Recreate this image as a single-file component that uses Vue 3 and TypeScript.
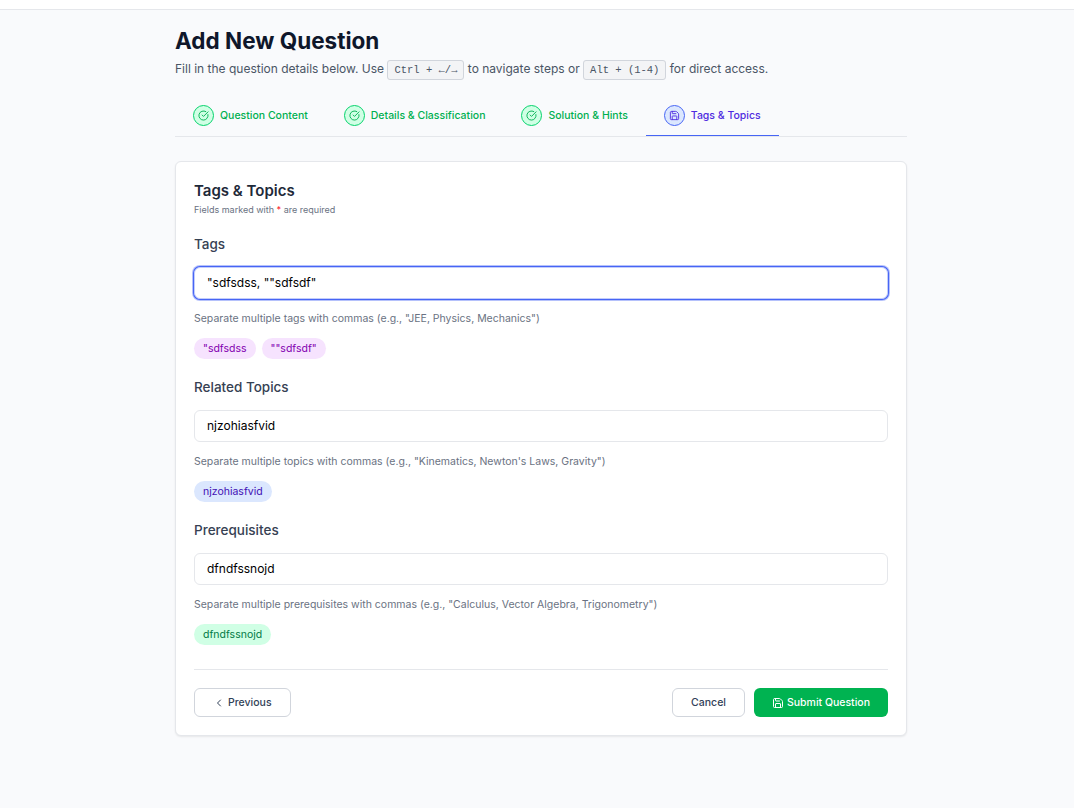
<script setup lang="ts">
import { ref } from 'vue'

interface Step {
  label: string
  active: boolean
}

interface Field {
  id: string
  label: string
  value: string
  hint: string
  chips: string[]
  tone: 'purple' | 'blue' | 'green'
  focused: boolean
}

const steps: Step[] = [
  { label: 'Question Content', active: false },
  { label: 'Details & Classification', active: false },
  { label: 'Solution & Hints', active: false },
  { label: 'Tags & Topics', active: true },
]

const fields = ref<Field[]>([
  {
    id: 'tags',
    label: 'Tags',
    value: '"sdfsdss, ""sdfsdf"',
    hint: 'Separate multiple tags with commas (e.g., "JEE, Physics, Mechanics")',
    chips: ['"sdfsdss', '""sdfsdf"'],
    tone: 'purple',
    focused: true,
  },
  {
    id: 'topics',
    label: 'Related Topics',
    value: 'njzohiasfvid',
    hint: 'Separate multiple topics with commas (e.g., "Kinematics, Newton\'s Laws, Gravity")',
    chips: ['njzohiasfvid'],
    tone: 'blue',
    focused: false,
  },
  {
    id: 'prerequisites',
    label: 'Prerequisites',
    value: 'dfndfssnojd',
    hint: 'Separate multiple prerequisites with commas (e.g., "Calculus, Vector Algebra, Trigonometry")',
    chips: ['dfndfssnojd'],
    tone: 'green',
    focused: false,
  },
])
</script>

<template>
  <div class="page">
    <header class="topbar"></header>
    <main class="container">
      <h1 class="title">Add New Question</h1>
      <p class="subtitle">
        Fill in the question details below. Use <kbd>Ctrl + ←/→</kbd> to navigate steps or
        <kbd>Alt + (1-4)</kbd> for direct access.
      </p>

      <nav class="steps">
        <button v-for="step in steps" :key="step.label" type="button" class="step" :class="{ active: step.active }">
          <span class="step-icon">
            <svg v-if="step.active" viewBox="0 0 24 24">
              <path d="M15.2 3a2 2 0 0 1 1.4.6l3.8 3.8a2 2 0 0 1 .6 1.4V19a2 2 0 0 1-2 2H5a2 2 0 0 1-2-2V5a2 2 0 0 1 2-2z" />
              <path d="M17 21v-7a1 1 0 0 0-1-1H8a1 1 0 0 0-1 1v7M7 3v4a1 1 0 0 0 1 1h7" />
            </svg>
            <svg v-else viewBox="0 0 24 24">
              <path d="M21.801 10A10 10 0 1 1 17 3.335" />
              <path d="m9 11 3 3L22 4" />
            </svg>
          </span>
          <span>{{ step.label }}</span>
        </button>
      </nav>

      <section class="card">
        <h2 class="card-title">Tags &amp; Topics</h2>
        <p class="required">Fields marked with <span class="star">*</span> are required</p>

        <div v-for="field in fields" :key="field.id" class="field">
          <label class="label" :for="field.id">{{ field.label }}</label>
          <input :id="field.id" v-model="field.value" class="input" :class="{ focused: field.focused }" type="text" />
          <p class="hint">{{ field.hint }}</p>
          <div class="chips">
            <span v-for="chip in field.chips" :key="chip" class="chip" :class="field.tone">{{ chip }}</span>
          </div>
        </div>

        <footer class="actions">
          <button type="button" class="btn previous">
            <svg viewBox="0 0 24 24"><path d="m15 18-6-6 6-6" /></svg>
            Previous
          </button>
          <div class="actions-end">
            <button type="button" class="btn">Cancel</button>
            <button type="button" class="btn submit">
              <svg viewBox="0 0 24 24">
                <path d="M15.2 3a2 2 0 0 1 1.4.6l3.8 3.8a2 2 0 0 1 .6 1.4V19a2 2 0 0 1-2 2H5a2 2 0 0 1-2-2V5a2 2 0 0 1 2-2z" />
                <path d="M17 21v-7a1 1 0 0 0-1-1H8a1 1 0 0 0-1 1v7M7 3v4a1 1 0 0 0 1 1h7" />
              </svg>
              Submit Question
            </button>
          </div>
        </footer>
      </section>
    </main>
  </div>
</template>

<style>
body {
  background: #f9fafc;
}
</style>

<style scoped>
.page {
  min-height: 808px;
  background: #f9fafc;
  font-family: Inter, 'Liberation Sans', sans-serif;
  color: #101828;
}
.page * {
  box-sizing: border-box;
}
h1,
h2,
p {
  margin: 0;
}
button,
input {
  font-family: inherit;
  margin: 0;
}
svg {
  fill: none;
  stroke: currentColor;
  stroke-width: 2;
  stroke-linecap: round;
  stroke-linejoin: round;
}
.topbar {
  height: 10px;
  background: #fff;
  border-bottom: 1px solid #e5e7eb;
}
.container {
  width: 732px;
  margin-left: 175px;
  padding-top: 17px;
}
.title {
  font-size: 22.5px;
  line-height: 27px;
  font-weight: 700;
  color: #0f172b;
}
.subtitle {
  margin-top: 6px;
  font-size: 12px;
  line-height: 18px;
  color: #4a5565;
}
kbd {
  padding: 3px 6px;
  font-family: 'Liberation Mono', monospace;
  font-size: 10.5px;
  line-height: 15px;
  background: #f3f4f6;
  border: 1px solid #d1d5dc;
  border-radius: 3px;
}
.steps {
  display: flex;
  margin-top: 16px;
  height: 43px;
  border-bottom: 1px solid #e5e7eb;
}
.step {
  display: flex;
  align-items: center;
  gap: 6px;
  height: 42px;
  padding: 2px 18px 0;
  border: 0;
  border-bottom: 1px solid transparent;
  background: transparent;
  font-size: 10.5px;
  line-height: 15px;
  font-weight: 500;
  color: #00b050;
}
.step.active {
  color: #4f2be0;
  border-bottom-color: #4765f5;
}
.step-icon {
  display: flex;
  align-items: center;
  justify-content: center;
  width: 21px;
  height: 21px;
  border: 1px solid #05d36c;
  border-radius: 50%;
  background: #d0ffe5;
}
.active .step-icon {
  border-color: #4765f5;
  background: #dbe7fe;
}
.step-icon svg {
  width: 11px;
  height: 11px;
}
.card {
  margin-top: 24px;
  height: 575px;
  padding: 18px;
  background: #fff;
  border: 1px solid #e5e7eb;
  border-radius: 6px;
  box-shadow: 0 1px 2px rgb(0 0 0 / 8%);
}
.card-title {
  font-size: 15px;
  line-height: 21px;
  font-weight: 600;
  color: #1e2939;
}
.required {
  margin-top: 3px;
  font-size: 9px;
  line-height: 12px;
  color: #6a7282;
}
.star {
  color: #fb2c36;
  font-weight: 500;
}
.field {
  display: flex;
  flex-direction: column;
  height: 125px;
  margin-top: 18px;
}
.label {
  font-size: 13.5px;
  line-height: 21px;
  font-weight: 500;
  color: #364153;
}
.input {
  width: 100%;
  height: 32px;
  margin-top: 12px;
  padding: 0 12px 1px;
  border: 1px solid #e5e7eb;
  border-radius: 6px;
  background: #fff;
  font-size: 12px;
  color: #000;
  outline: none;
}
.input.focused {
  border-color: #c3cdfb;
  box-shadow:
    0 0 0 1px #4765f5,
    0 0 0 2px rgb(71 101 245 / 40%);
}
.hint {
  margin-top: 12px;
  font-size: 10.5px;
  line-height: 15px;
  color: #6a7282;
}
.chips {
  display: flex;
  gap: 6px;
  margin-top: 12px;
}
.chip {
  height: 21px;
  padding: 0 9px;
  border-radius: 11px;
  font-size: 10.5px;
  line-height: 21px;
}
.purple {
  background: #f6e3fe;
  color: #8200b0;
}
.blue {
  background: #dbe7fe;
  color: #4210b5;
}
.green {
  background: #d0ffe5;
  color: #017a45;
}
.actions {
  display: flex;
  justify-content: space-between;
  margin-top: 24px;
  padding-top: 18px;
  border-top: 1px solid #e5e7eb;
}
.actions-end {
  display: flex;
  gap: 9px;
}
.btn {
  display: flex;
  align-items: center;
  height: 29px;
  padding: 0 18px;
  border: 1px solid #d1d5dc;
  border-radius: 6px;
  background: #fff;
  font-size: 10.5px;
  line-height: 15px;
  font-weight: 500;
  color: #314158;
}
.btn svg {
  width: 12px;
  height: 12px;
  margin-right: 3px;
}
.submit {
  border: 0;
  background: #00b351;
  color: #fff;
}
</style>
